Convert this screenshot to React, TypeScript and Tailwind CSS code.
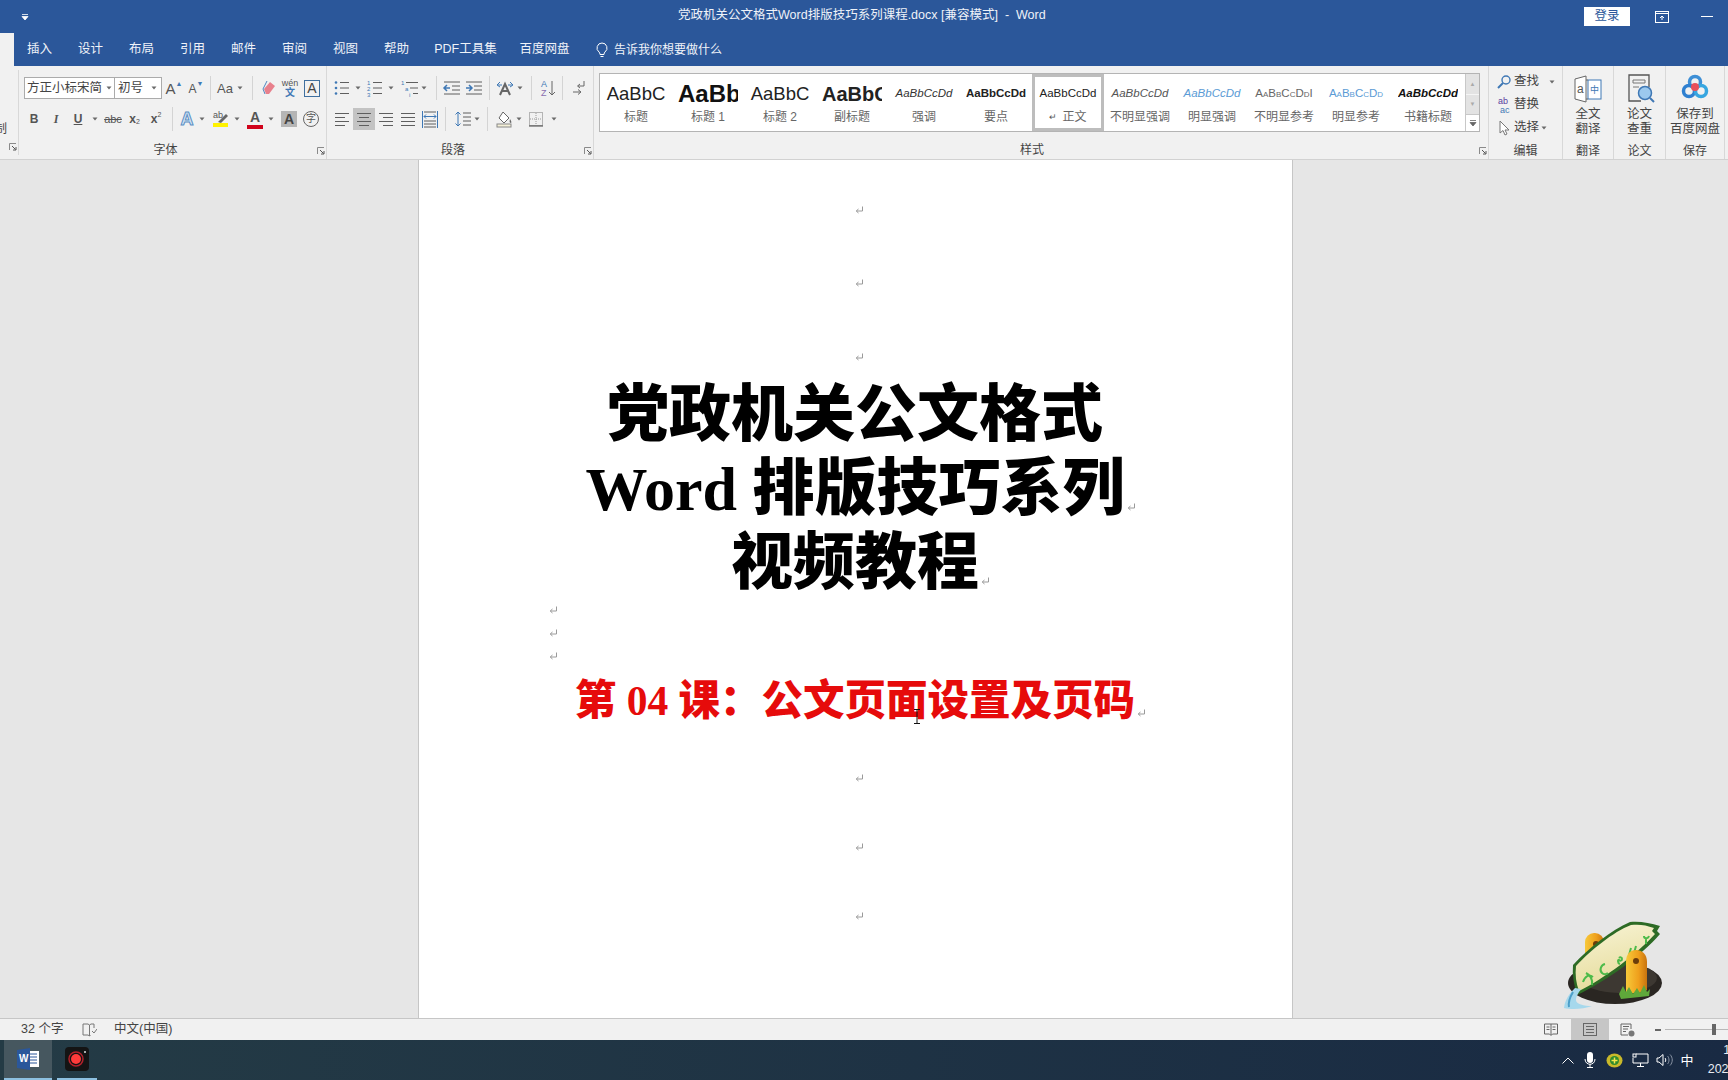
import React from "react";

const c = "#5f5f5f";
const blue = "#3f78b5";

const Caret = ({ className = "" }: { className?: string }) => (
  <div className={"flex items-center justify-center shrink-0 " + className}>
    <svg width="6" height="4" viewBox="0 0 6 4">
      <path d="M0.5 0.5h5L3 3.5z" fill="#6a6a6a" />
    </svg>
  </div>
);

const Sep = ({ className = "" }: { className?: string }) => (
  <div className={"w-px h-[24px] bg-[#d4d4d4] shrink-0 " + className} />
);

const Cell = ({ className = "", children }: { className?: string; children: React.ReactNode }) => (
  <div className={"flex items-center justify-center shrink-0 h-[22px] " + className}>{children}</div>
);

const Launcher = () => (
  <div className="absolute right-[1px] bottom-[4px] w-[8px] h-[8px]">
    <svg width="8" height="8" viewBox="0 0 8 8">
      <path d="M0.5 7V0.5H7" stroke="#8a8a8a" fill="none" />
      <path d="M3 3l3.5 3.5M7 4v3H4" stroke="#555" fill="none" />
    </svg>
  </div>
);

const GroupLabel = ({ children, className = "" }: { children: React.ReactNode; className?: string }) => (
  <div className={"h-[20px] shrink-0 flex items-center justify-center text-[12px] text-[#444] leading-none " + className}>
    {children}
  </div>
);

const Lines = ({ rows, x1, x2 }: { rows: number[]; x1: number[]; x2: number[] }) => (
  <>
    {rows.map((y, i) => (
      <path key={i} d={`M${x1[i]} ${y}H${x2[i]}`} stroke={c} strokeWidth="1" />
    ))}
  </>
);

const Ico = ({ children }: { children: React.ReactNode }) => (
  <svg width="20" height="20" viewBox="0 0 20 20" fill="none">
    {children}
  </svg>
);

const Align = ({ kind }: { kind: "left" | "center" | "right" | "just" }) => {
  const x1 =
    kind === "left" ? [3, 3, 3, 3] : kind === "center" ? [3, 5, 3, 5] : kind === "right" ? [3, 7, 3, 7] : [3, 3, 3, 3];
  const x2 =
    kind === "left" ? [17, 13, 17, 13] : kind === "center" ? [17, 15, 17, 15] : [17, 17, 17, 17];
  return (
    <Ico>
      <Lines rows={[4.5, 8.5, 12.5, 16.5]} x1={x1} x2={x2} />
    </Ico>
  );
};

const ParaMark = () => (
  <svg width="9" height="9" viewBox="0 0 9 9" fill="none" className="shrink-0">
    <path d="M7.5 0.5V5H1.5M3.5 3L1.2 5l2.3 2" stroke="#9a9a9a" strokeWidth="1" />
  </svg>
);

const MarkRow = ({ className = "" }: { className?: string }) => (
  <div className={"flex items-center justify-center shrink-0 pl-[8px] " + className}>
    <ParaMark />
  </div>
);

const FontRowOne = () => (
  <div className="flex items-center h-[22px] pl-[5px]">
    <div className="flex items-center w-[91px] h-[22px] border border-[#ababab] bg-white shrink-0 pl-[2px]">
      <span className="text-[12.5px] text-[#444] whitespace-nowrap leading-none">方正小标宋简</span>
      <Caret className="w-[10px] ml-[2px]" />
    </div>
    <div className="flex items-center w-[47px] h-[22px] border border-l-0 border-[#ababab] bg-white shrink-0 pl-[3px]">
      <span className="text-[12.5px] text-[#444] leading-none">初号</span>
      <Caret className="w-[10px] ml-[6px]" />
    </div>
    <Cell className="w-[22px] ml-px">
      <span className="text-[15px] text-[#555] leading-none">A</span>
      <span className="text-[7px] text-[#3f78b5] -mt-[10px] leading-none">▲</span>
    </Cell>
    <Cell className="w-[22px]">
      <span className="text-[12px] text-[#555] leading-none mt-[2px]">A</span>
      <span className="text-[7px] text-[#3f78b5] -mt-[10px] leading-none">▼</span>
    </Cell>
    <Sep className="ml-[3px]" />
    <Cell className="w-[22px] ml-[3px]">
      <span className="text-[13px] text-[#555] leading-none">Aa</span>
    </Cell>
    <Caret className="w-[8px]" />
    <Sep className="ml-[8px]" />
    <Cell className="w-[22px] ml-[5px]">
      <Ico>
        <path d="M5 11l6-7 5 4-6 8H7z" fill="#e8808c" />
        <path d="M8 3l-4 8 2 5" stroke="#4f86c0" strokeWidth="1" />
      </Ico>
    </Cell>
    <Cell className="w-[20px] flex-col">
      <span className="text-[9px] text-[#555] leading-[9px]">wén</span>
      <span className="text-[10px] text-[#3f78b5] leading-[10px] font-bold">文</span>
    </Cell>
    <Cell className="w-[22px] ml-px">
      <div className="w-[16px] h-[17px] border border-[#3f6f9f] flex items-center justify-center text-[14px] text-[#444] leading-none">
        A
      </div>
    </Cell>
  </div>
);

const FontRowTwo = () => (
  <div className="flex items-center h-[22px] pl-[4px]">
    <Cell className="w-[22px] text-[12px] font-bold text-[#555]">B</Cell>
    <Cell className="w-[22px] text-[12px] italic font-bold text-[#555] [font-family:'Liberation_Serif',serif]">I</Cell>
    <Cell className="w-[22px] text-[12px] font-bold text-[#555] underline">U</Cell>
    <Caret className="w-[12px]" />
    <Cell className="w-[22px] ml-px text-[11px] text-[#555] line-through">abc</Cell>
    <Cell className="w-[21px] text-[12px] font-bold text-[#555]">
      x<span className="text-[7px] mt-[7px] font-normal">2</span>
    </Cell>
    <Cell className="w-[22px] text-[12px] font-bold text-[#555]">
      x<span className="text-[7px] -mt-[7px] font-normal">2</span>
    </Cell>
    <Sep className="ml-[5px]" />
    <Cell className="w-[20px] ml-[4px]">
      <span className="text-[18px] font-bold leading-none text-[#d6e6f5] [-webkit-text-stroke:1px_#5b8fc4]">A</span>
    </Cell>
    <Caret className="w-[10px]" />
    <Cell className="w-[22px] ml-[3px]">
      <Ico>
        <rect x="2" y="14" width="15" height="4" fill="#fff200" />
        <path d="M7 13l8-8 2 2-7 7z" fill="#666" />
        <text x="2" y="9" fontSize="9" fill="#555" fontFamily="Liberation Sans">ab</text>
      </Ico>
    </Cell>
    <Caret className="w-[10px]" />
    <Cell className="w-[22px] ml-[2px] flex-col">
      <span className="text-[14px] font-bold leading-[15px] text-[#555]">A</span>
      <div className="w-[16px] h-[4px] bg-[#d0021b]" />
    </Cell>
    <Caret className="w-[10px]" />
    <Cell className="w-[22px] ml-[2px]">
      <div className="w-[16px] h-[16px] bg-[#b5b5b5] flex items-center justify-center text-[14px] font-bold text-[#444] leading-none">
        A
      </div>
    </Cell>
    <Cell className="w-[22px]">
      <div className="w-[16px] h-[16px] rounded-full border border-[#666] flex items-center justify-center text-[10px] text-[#555] leading-none">
        字
      </div>
    </Cell>
  </div>
);

const ParaRowOne = () => (
  <div className="flex items-center h-[22px] pl-[4px]">
    <Cell className="w-[22px]">
      <Ico>
        <circle cx="4" cy="4.5" r="1.3" fill={blue} />
        <circle cx="4" cy="10" r="1.3" fill={blue} />
        <circle cx="4" cy="15.5" r="1.3" fill={blue} />
        <Lines rows={[4.5, 10, 15.5]} x1={[8, 8, 8]} x2={[17, 17, 17]} />
      </Ico>
    </Cell>
    <Caret className="w-[10px]" />
    <Cell className="w-[22px] ml-px">
      <Ico>
        <text x="2" y="7" fontSize="6" fill={blue}>1</text>
        <text x="2" y="13" fontSize="6" fill={blue}>2</text>
        <text x="2" y="19" fontSize="6" fill={blue}>3</text>
        <Lines rows={[4.5, 10, 15.5]} x1={[8, 8, 8]} x2={[17, 17, 17]} />
      </Ico>
    </Cell>
    <Caret className="w-[10px]" />
    <Cell className="w-[22px] ml-[3px]">
      <Ico>
        <text x="1" y="7" fontSize="6" fill={blue}>1</text>
        <text x="5" y="13" fontSize="6" fill={blue}>a</text>
        <text x="9" y="19" fontSize="6" fill={blue}>i</text>
        <Lines rows={[4.5, 10, 15.5]} x1={[6, 10, 13]} x2={[18, 18, 18]} />
      </Ico>
    </Cell>
    <Caret className="w-[6px]" />
    <Sep className="ml-[9px]" />
    <Cell className="w-[22px] ml-[4px]">
      <Ico>
        <Lines rows={[4, 16]} x1={[2, 2]} x2={[18, 18]} />
        <Lines rows={[8, 12]} x1={[10, 10]} x2={[18, 18]} />
        <path d="M8 10H2M5 7l-3 3 3 3" stroke={blue} strokeWidth="1.5" />
      </Ico>
    </Cell>
    <Cell className="w-[22px]">
      <Ico>
        <Lines rows={[4, 16]} x1={[2, 2]} x2={[18, 18]} />
        <Lines rows={[8, 12]} x1={[10, 10]} x2={[18, 18]} />
        <path d="M2 10h6M5 7l3 3-3 3" stroke={blue} strokeWidth="1.5" />
      </Ico>
    </Cell>
    <Sep className="ml-[4px]" />
    <Cell className="w-[22px] ml-[4px]">
      <Ico>
        <path d="M5 17l5-11 5 11M7 13h6" stroke="#666" strokeWidth="2" />
        <path d="M2 7l3-3M2 7l3 2M18 7l-3-3M18 7l-3 2M3 7h4M13 7h4" stroke={blue} strokeWidth="1" />
      </Ico>
    </Cell>
    <Caret className="w-[8px]" />
    <Sep className="ml-[7px]" />
    <Cell className="w-[22px] ml-[5px]">
      <Ico>
        <text x="3" y="9" fontSize="9" fill={blue} fontFamily="Liberation Sans">A</text>
        <text x="3" y="18" fontSize="9" fill="#8a6fb0" fontFamily="Liberation Sans">Z</text>
        <path d="M14 3v14M11 14l3 3 3-3" stroke="#666" strokeWidth="1" />
      </Ico>
    </Cell>
    <Sep className="ml-[3px]" />
    <Cell className="w-[22px] ml-[5px]">
      <Ico>
        <path d="M15 3v5H9M11 6L8.5 8l2.5 2" stroke="#666" strokeWidth="1" />
        <path d="M4 14h7M9 11.5l3 2.5-3 2.5" stroke="#666" strokeWidth="1" />
      </Ico>
    </Cell>
  </div>
);

const ParaRowTwo = () => (
  <div className="flex items-center h-[22px] pl-[4px]">
    <Cell className="w-[22px]">
      <Align kind="left" />
    </Cell>
    <Cell className="w-[22px] bg-[#c3c3c3]">
      <Align kind="center" />
    </Cell>
    <Cell className="w-[22px]">
      <Align kind="right" />
    </Cell>
    <Cell className="w-[22px]">
      <Align kind="just" />
    </Cell>
    <Cell className="w-[22px]">
      <Ico>
        <Lines rows={[3, 12, 15, 18]} x1={[4, 4, 4, 4]} x2={[16, 16, 16, 16]} />
        <path d="M2.5 2v17M17.5 2v17" stroke={blue} />
        <path d="M4 7.5h12M6 5.5l-2 2 2 2M14 5.5l2 2-2 2" stroke={blue} />
      </Ico>
    </Cell>
    <Sep className="ml-[4px]" />
    <Cell className="w-[22px] ml-[6px]">
      <Ico>
        <path d="M5 3v14M2.5 5.5L5 3l2.5 2.5M2.5 14.5L5 17l2.5-2.5" stroke={blue} />
        <Lines rows={[4, 8, 12, 16]} x1={[10, 10, 10, 10]} x2={[18, 18, 18, 18]} />
      </Ico>
    </Cell>
    <Caret className="w-[6px]" />
    <Sep className="ml-[7px]" />
    <Cell className="w-[22px] ml-[5px]">
      <Ico>
        <path d="M9 3l6 6-5 5-5-5z" stroke="#666" fill="#fff" />
        <path d="M16 10c1 2 2 3 1 4-1 0-2-1-1-4z" fill="#666" />
        <rect x="3" y="15" width="14" height="3" fill="#f4f0d8" stroke="#888" />
      </Ico>
    </Cell>
    <Caret className="w-[8px]" />
    <Cell className="w-[22px] ml-[2px]">
      <Ico>
        <rect x="3.5" y="3.5" width="13" height="13" stroke="#777" strokeDasharray="1 1" />
        <path d="M10 4v12M4 10h12" stroke="#999" strokeDasharray="1 1" />
        <path d="M3 17h14" stroke="#444" />
      </Ico>
    </Cell>
    <Caret className="w-[10px] ml-[2px]" />
  </div>
);

type StyleItem = { top: string; label: string; cls: string };

const styleItems: StyleItem[] = [
  { top: "AaBbC", label: "标题", cls: "text-[18.5px] text-[#222]" },
  { top: "AaBbC", label: "标题 1", cls: "text-[24px] font-bold text-[#111]" },
  { top: "AaBbC", label: "标题 2", cls: "text-[18.5px] text-[#222]" },
  { top: "AaBbC", label: "副标题", cls: "text-[20px] font-bold text-[#222]" },
  { top: "AaBbCcDd", label: "强调", cls: "text-[11.5px] italic text-[#333]" },
  { top: "AaBbCcDd", label: "要点", cls: "text-[11.5px] font-bold text-[#222]" },
  { top: "AaBbCcDd", label: "正文", cls: "text-[11.5px] text-[#222]" },
  { top: "AaBbCcDd", label: "不明显强调", cls: "text-[11.5px] italic text-[#555]" },
  { top: "AaBbCcDd", label: "明显强调", cls: "text-[11.5px] italic text-[#5b9bd5]" },
  { top: "AaBbCcDdI", label: "不明显参考", cls: "text-[11.5px] text-[#666] [font-variant:small-caps]" },
  { top: "AaBbCcDd", label: "明显参考", cls: "text-[11.5px] text-[#5b9bd5] [font-variant:small-caps]" },
  { top: "AaBbCcDd", label: "书籍标题", cls: "text-[11.5px] italic font-bold text-[#111]" },
];

const Gallery = () => (
  <div className="flex ml-[5px] mt-[7px] w-[881px] h-[59px] border border-[#b4b4b4] bg-white shrink-0">
    <div className="flex w-[865px] shrink-0">
      {styleItems.map((s, i) => (
        <div
          key={i}
          className={
            "w-[72px] h-[57px] shrink-0 flex flex-col items-center " +
            (s.label === "正文" ? "border-[3px] border-[#bdbdbd]" : "border-[3px] border-transparent")
          }
        >
          <div className="w-[60px] h-[30px] pt-[4px] overflow-hidden flex items-center justify-center-safe">
            <span className={"whitespace-nowrap leading-none " + s.cls}>{s.top}</span>
          </div>
          <div className="h-[20px] flex items-center text-[12px] text-[#666] leading-none whitespace-nowrap">
            {s.label === "正文" && <span className="text-[9px] mr-[5px] text-[#555]">↵</span>}
            {s.label}
          </div>
        </div>
      ))}
    </div>
    <div className="w-[14px] flex flex-col border-l border-[#c8c8c8]">
      <div className="h-[20px] bg-[#e3e3e3] flex items-center justify-center text-[6px] text-[#aaa]">▲</div>
      <div className="h-[20px] bg-[#e3e3e3] flex items-center justify-center text-[6px] text-[#aaa] border-t border-[#f5f5f5]">
        ▼
      </div>
      <div className="flex-1 flex items-center justify-center border-t border-[#c8c8c8]">
        <svg width="8" height="8" viewBox="0 0 8 8">
          <path d="M1 1.5h6M1 3.5h6L4 7z" stroke="#666" fill="#666" strokeWidth="0.8" />
        </svg>
      </div>
    </div>
  </div>
);

const EditRow = ({ icon, text, caret, caretClass }: { icon: React.ReactNode; text: string; caret?: boolean; caretClass?: string }) => (
  <div className="flex items-center h-[23px] shrink-0 pl-[5px]">
    <div className="w-[19px] h-[20px] flex items-center justify-center shrink-0">{icon}</div>
    <span className="text-[12.5px] text-[#444] leading-none ml-[1px] whitespace-nowrap">{text}</span>
    {caret && <Caret className={caretClass} />}
  </div>
);

const Ribbon = () => (
  <div className="flex h-[94px] bg-[#f1f1f1] border-b border-[#d2d2d2] shrink-0">
    {/* clipboard group, cut off at the window edge */}
    <div className="w-[19px] shrink-0 relative border-r border-[#d8d8d8] my-[4px] overflow-hidden">
      <span className="absolute top-[53px] -left-[5px] text-[12px] text-[#444] leading-none">制</span>
      <Launcher />
    </div>

    <div className="w-[308px] shrink-0 relative border-r border-[#d8d8d8]">
      <div className="pt-[11px]">
        <FontRowOne />
      </div>
      <div className="mt-[9px]">
        <FontRowTwo />
      </div>
      <GroupLabel className="mt-[10px] pr-[14px]">字体</GroupLabel>
      <Launcher />
    </div>

    <div className="w-[267px] shrink-0 relative border-r border-[#d8d8d8]">
      <div className="pt-[11px]">
        <ParaRowOne />
      </div>
      <div className="mt-[9px]">
        <ParaRowTwo />
      </div>
      <GroupLabel className="mt-[10px] pr-[14px]">段落</GroupLabel>
      <Launcher />
    </div>

    <div className="w-[895px] shrink-0 relative border-r border-[#d8d8d8]">
      <Gallery />
      <GroupLabel className="mt-[8px] pr-[18px]">样式</GroupLabel>
      <Launcher />
    </div>

    <div className="w-[74px] shrink-0 flex flex-col border-r border-[#d8d8d8]">
      <div className="pt-[4px] h-[75px] shrink-0 flex flex-col">
        <EditRow
          text="查找"
          caret
          caretClass="w-[10px] ml-[8px]"
          icon={
            <svg width="16" height="16" viewBox="0 0 16 16" fill="none">
              <circle cx="10" cy="6" r="4" stroke="#3f78b5" strokeWidth="1.4" />
              <path d="M7 9l-5 5" stroke="#3f78b5" strokeWidth="2" />
            </svg>
          }
        />
        <EditRow
          text="替换"
          icon={
            <svg width="18" height="18" viewBox="0 0 18 18">
              <text x="3" y="8" fontSize="9" fill="#5b3fa0" fontFamily="Liberation Sans">ab</text>
              <text x="5" y="17" fontSize="9" fill="#3f78b5" fontFamily="Liberation Sans">ac</text>
            </svg>
          }
        />
        <EditRow
          text="选择"
          caret
          caretClass="w-[8px] ml-[1px]"
          icon={
            <svg width="14" height="18" viewBox="0 0 14 18" fill="none">
              <path d="M3 2v12l3-2.500 2 4.500 2-1-2-4h4z" stroke="#777" fill="#fff" />
            </svg>
          }
        />
      </div>
      <GroupLabel>编辑</GroupLabel>
    </div>

    <div className="w-[51px] shrink-0 flex flex-col items-center border-r border-[#d8d8d8]">
      <div className="h-[38px] shrink-0 flex items-end">
        <svg width="30" height="30" viewBox="0 0 30 30" fill="none">
          <path d="M2 5l11-3v26L2 25z" stroke="#666" fill="#fff" />
          <rect x="15" y="6" width="13" height="19" stroke="#3f78b5" fill="#fff" />
          <path d="M13 6h2M13 25h2" stroke="#666" />
          <text x="4" y="19" fontSize="12" fill="#555" fontFamily="Liberation Sans">a</text>
          <text x="17" y="19" fontSize="9" fill="#3f78b5" fontFamily="Noto Sans CJK SC">中</text>
        </svg>
      </div>
      <div className="h-[37px] shrink-0 pt-[3px] text-center text-[12.5px] leading-[15px] text-[#444]">
        全文
        <br />
        翻译
      </div>
      <GroupLabel>翻译</GroupLabel>
    </div>

    <div className="w-[52px] shrink-0 flex flex-col items-center border-r border-[#d8d8d8]">
      <div className="h-[38px] shrink-0 flex items-end">
        <svg width="30" height="32" viewBox="0 0 30 32" fill="none">
          <path d="M16 29H4V3h20v12" stroke="#555" strokeWidth="1.3" />
          <path d="M8 8h12v3H8zM8 15h6" stroke="#777" />
          <circle cx="20" cy="21" r="6.500" fill="#9cc9ee" stroke="#3f78b5" strokeWidth="1.5" />
          <path d="M25 26l4 4" stroke="#3f78b5" strokeWidth="2" />
        </svg>
      </div>
      <div className="h-[37px] shrink-0 pt-[3px] text-center text-[12.5px] leading-[15px] text-[#444]">
        论文
        <br />
        查重
      </div>
      <GroupLabel>论文</GroupLabel>
    </div>

    <div className="w-[59px] shrink-0 flex flex-col items-center border-r border-[#d8d8d8]">
      <div className="h-[38px] shrink-0 flex items-end pb-[3px]">
        <svg width="28" height="28" viewBox="0 0 28 28" fill="none">
          <circle cx="14" cy="9" r="5.500" stroke="#3d8fd6" strokeWidth="3.500" />
          <circle cx="8" cy="18" r="5.500" stroke="#2f80d0" strokeWidth="3.500" />
          <circle cx="20" cy="18" r="5.500" stroke="#37a6e0" strokeWidth="3.500" />
          <circle cx="14" cy="14" r="4" fill="#e8505b" />
        </svg>
      </div>
      <div className="h-[37px] shrink-0 pt-[3px] text-center text-[12.5px] leading-[15px] text-[#444] whitespace-nowrap">
        保存到
        <br />
        百度网盘
      </div>
      <GroupLabel>保存</GroupLabel>
    </div>
  </div>
);

const tabs = [
  { t: "插入", w: "w-[51px]" },
  { t: "设计", w: "w-[51px]" },
  { t: "布局", w: "w-[51px]" },
  { t: "引用", w: "w-[51px]" },
  { t: "邮件", w: "w-[51px]" },
  { t: "审阅", w: "w-[51px]" },
  { t: "视图", w: "w-[51px]" },
  { t: "帮助", w: "w-[51px]" },
  { t: "PDF工具集", w: "w-[87px]" },
  { t: "百度网盘", w: "w-[71px]" },
];

const Mascot = () => (
  <svg width="104" height="96" viewBox="0 0 104 96" fill="none" className="absolute left-[1561px] top-[916px]">
    <defs>
      <linearGradient id="post" x1="0" y1="0" x2="1" y2="0">
        <stop offset="0" stopColor="#f7c93a" />
        <stop offset="0.6" stopColor="#ef9f1c" />
        <stop offset="1" stopColor="#c8740f" />
      </linearGradient>
      <linearGradient id="leaf" x1="0" y1="0" x2="0.3" y2="1">
        <stop offset="0" stopColor="#f8f4d6" />
        <stop offset="1" stopColor="#e6dc9c" />
      </linearGradient>
    </defs>
    <ellipse cx="54" cy="67" rx="47" ry="21" fill="#2a2622" />
    <ellipse cx="58" cy="62" rx="38" ry="15" fill="#3d3832" />
    <rect x="24" y="17" width="19" height="36" rx="9" fill="url(#post)" />
    <circle cx="35" cy="28" r="3" fill="#6b3c0a" />
    <path d="M12 49C28 32 50 14 69 6c10-1 20 1 30 4l-3 5 3 3C80 40 44 66 16 79c-3-10-5-20-4-30z" fill="#2d6b25" />
    <path d="M15 50C30 34 52 16 70 9c8-1 15 0 23 3l-2 3 3 3C76 38 44 62 18 75c-3-8-4-16-3-25z" fill="url(#leaf)" />
    <path d="M22 66c2-6 6-8 10-5M25 57c4 2 7 5 6 12M44 48c-4 1-6 6-3 9 2 2 5 1 6 0M58 42c1-1 3-1 3 1s-2 2-3 1-2 3 1 4M70 32l-2 7M75 30l-2 7M83 20c0 3 4 3 5 0M85 22v6" stroke="#4dbb4a" strokeWidth="2" />
    <path d="M65 76V46c0-8 4-12 10-12s11 4 11 12v28c-6 4-15 4-21 2z" fill="url(#post)" />
    <circle cx="75" cy="45" r="3" fill="#6b3c0a" />
    <path d="M58 78l4-8 3 6 3-5 4 7 4-6 3 5 4-8 3 7 3-3-1 7-28 3z" fill="#5fa83a" />
    <path d="M14 72C8 78 4 84 3 92c8 2 20 1 28-2-8 0-16-2-16-6 0-4 3-8 5-11z" fill="#a6d8ec" />
    <path d="M12 76c-3 5-5 10-4 15" stroke="#4c9fc9" strokeWidth="2" />
  </svg>
);

export default function App() {
  return (
    <div className="relative w-[1728px] h-[1080px] overflow-hidden flex flex-col bg-[#e6e6e6] [font-family:'Liberation_Sans','Noto_Sans_CJK_SC',sans-serif]">
      {/* title bar */}
      <div className="h-[33px] bg-[#2b579a] flex items-center shrink-0 text-white">
        <div className="w-[678px] shrink-0 pl-[21px]">
          <svg width="8" height="8" viewBox="0 0 8 8" fill="none">
            <path d="M1 1.5h6M1 3.500h6L4 7z" stroke="#fff" fill="#fff" strokeWidth="0.8" />
          </svg>
        </div>
        <span className="w-[906px] shrink-0 whitespace-pre text-[12.5px] text-[#eef2f8] leading-none -mt-[3px]">
          党政机关公文格式Word排版技巧系列课程.docx [兼容模式]  -  Word
        </span>
        <button className="w-[46px] h-[19px] bg-white text-[#2b579a] text-[12.5px] leading-none shrink-0 -mt-[1px]">
          登录
        </button>
        <div className="w-[64px] shrink-0 flex justify-center">
          <svg width="14" height="12" viewBox="0 0 14 12" fill="none">
            <rect x="0.500" y="0.500" width="13" height="11" stroke="#fff" />
            <path d="M0.500 2.500h13M7 9V5M5 7l2-2 2 2" stroke="#fff" />
          </svg>
        </div>
        <div className="w-[12px] ml-[7px] shrink-0 h-px bg-white" />
      </div>

      {/* tab row */}
      <div className="h-[33px] bg-[#2b579a] flex items-center shrink-0 text-[#f0f3f9] text-[12.5px] leading-none">
        <div className="w-[14px] h-full bg-[#f1f1f1] shrink-0" />
        {tabs.map((t) => (
          <div key={t.t} className={"text-center shrink-0 whitespace-nowrap " + t.w}>
            {t.t}
          </div>
        ))}
        <svg width="14" height="16" viewBox="0 0 14 16" fill="none" className="ml-[15px] shrink-0">
          <path d="M7 1a5 5 0 00-3 9c.6.5 1 1.200 1 2.500h4c0-1.300.4-2 1-2.500A5 5 0 007 1zM5.500 14.500h3" stroke="#fff" />
        </svg>
        <span className="ml-[5px] whitespace-nowrap text-[12px]">告诉我你想要做什么</span>
      </div>

      <Ribbon />

      {/* document */}
      <div className="flex-1 min-h-0 flex justify-center pr-[18px] overflow-hidden">
        <div className="w-[875px] bg-white border-x border-[#c6c6c6] shrink-0 flex flex-col items-center pt-[40px]">
          <MarkRow className="h-[20px]" />
          <MarkRow className="h-[20px] mt-[53px]" />
          <MarkRow className="h-[20px] mt-[54px]" />
          <div className="mt-[11px] flex flex-col items-center text-[62px] leading-[74px] font-black text-black whitespace-nowrap [font-family:'Liberation_Serif','Noto_Sans_CJK_SC',serif]">
            <div>党政机关公文格式</div>
            <div className="relative">
              Word 排版技巧系列
              <div className="absolute left-full bottom-[14px] ml-[2px] flex">
                <ParaMark />
              </div>
            </div>
            <div className="relative">
              视频教程
              <div className="absolute left-full bottom-[14px] ml-[2px] flex">
                <ParaMark />
              </div>
            </div>
          </div>
          <div className="w-full pl-[130px] flex flex-col">
            <div className="h-[21px] flex items-center"><ParaMark /></div>
            <div className="h-[24px] flex items-center"><ParaMark /></div>
            <div className="h-[23px] flex items-center"><ParaMark /></div>
          </div>
          <div className="relative h-[64px] pt-[4px] flex items-center text-[41.500px] leading-none font-black text-[#e60b0b] whitespace-nowrap [font-family:'Liberation_Serif','Noto_Sans_CJK_SC',serif]">
            {"第 04 课\uFF1A公文页面设置及页码"}
            <div className="absolute left-full bottom-[14px] ml-[2px] flex">
              <ParaMark />
            </div>
          </div>
          <MarkRow className="h-[20px] mt-[36px]" />
          <MarkRow className="h-[20px] mt-[49px]" />
          <MarkRow className="h-[20px] mt-[49px]" />
        </div>
      </div>

      {/* status bar */}
      <div className="h-[22px] bg-[#f1f1f1] border-t border-[#c6c6c6] flex items-center shrink-0 text-[12.500px] text-[#444] leading-none">
        <span className="ml-[21px] w-[61px] shrink-0 whitespace-nowrap">32 个字</span>
        <svg width="15" height="14" viewBox="0 0 15 14" fill="none" className="shrink-0">
          <path d="M1 1h5l1.500 1V13L6 12H1zM7.500 2L9 1h3v4M7.500 13l1-1" stroke="#777" />
          <path d="M10 8l2 2 3-4" stroke="#777" />
        </svg>
        <span className="ml-[17px] w-[1429px] shrink-0 whitespace-nowrap">中文(中国)</span>
        <div className="w-[18px] shrink-0 flex justify-center -ml-[1px]">
          <svg width="14" height="13" viewBox="0 0 14 13" fill="none">
            <path d="M0.500 1h13v10h-5L7 12.500 5.500 11h-5zM7 1v11M2.500 4h3M2.500 6.500h3M8.500 4h3M8.500 6.500h3" stroke="#666" />
          </svg>
        </div>
        <div className="w-[38px] h-full ml-[11px] bg-[#c6c6c6] shrink-0 flex items-center justify-center">
          <svg width="14" height="13" viewBox="0 0 14 13" fill="none">
            <rect x="0.500" y="0.500" width="13" height="12" stroke="#666" />
            <path d="M3 3.500h8M3 6.500h8M3 9.500h8" stroke="#666" />
          </svg>
        </div>
        <div className="w-[37px] shrink-0 flex justify-center">
          <svg width="15" height="14" viewBox="0 0 15 14" fill="none">
            <path d="M8 12H1V1h10v5M3 3.500h6M3 6h5M3 8.500h3" stroke="#666" />
            <circle cx="11.500" cy="10.500" r="3" fill="#777" />
          </svg>
        </div>
        <div className="w-[6px] h-[2px] bg-[#666] shrink-0 ml-[9px]" />
        <div className="ml-[4px] flex-1 h-px bg-[#b8b8b8] relative">
          <div className="absolute left-[47px] -top-[5px] w-[4px] h-[11px] bg-[#666]" />
        </div>
      </div>

      {/* taskbar */}
      <div className="h-[40px] shrink-0 flex items-stretch bg-gradient-to-r from-[#243b45] to-[#192a43] text-white overflow-hidden">
        <div className="ml-[4px] w-[48px] bg-[#46575f] border-b-[2px] border-[#8dc0e0] shrink-0 flex items-center justify-center">
          <svg width="24" height="22" viewBox="0 0 24 22">
            <rect x="10" y="3" width="13" height="16" fill="#fff" />
            <path d="M13 6h8M13 9h8M13 12h8M13 15h8" stroke="#2b579a" />
            <path d="M1 2l13-2v22L1 20z" fill="#2b579a" />
            <text x="3" y="14" fontSize="10" fontWeight="bold" fill="#fff" fontFamily="Liberation Sans">W</text>
          </svg>
        </div>
        <div className="ml-[5px] w-[40px] border-b-[2px] border-[#8dc0e0] shrink-0 flex items-center justify-center">
          <svg width="24" height="24" viewBox="0 0 24 24">
            <rect width="24" height="24" rx="4" fill="#141414" />
            <circle cx="11" cy="12" r="7" fill="none" stroke="#b3202a" strokeWidth="1.500" />
            <circle cx="11" cy="12" r="5" fill="#ff3b3b" />
            <circle cx="20" cy="5" r="1" fill="#ddd" />
          </svg>
        </div>
        <div className="w-[1460px] shrink-0" />
        <div className="w-[21px] shrink-0 flex items-center justify-center">
          <svg width="12" height="7" viewBox="0 0 12 7" fill="none">
            <path d="M0.500 6.500L6 1l5.500 5.500" stroke="#fff" />
          </svg>
        </div>
        <div className="w-[23px] shrink-0 flex items-center justify-center">
          <svg width="12" height="16" viewBox="0 0 12 16">
            <rect x="3" y="0" width="6" height="11" rx="3" fill="#fff" />
            <path d="M1 7c0 7 10 7 10 0M6 12v3M3 15.500h6" stroke="#fff" fill="none" />
          </svg>
        </div>
        <div className="w-[27px] shrink-0 flex items-center justify-center">
          <svg width="17" height="15" viewBox="0 0 17 15">
            <ellipse cx="8.500" cy="7.500" rx="8" ry="7" fill="#c9b92a" />
            <circle cx="8.500" cy="7.500" r="4.500" fill="#2d8a2d" />
            <path d="M8.500 4.500v6M5.500 7.500h6" stroke="#f4e84a" strokeWidth="1.500" />
          </svg>
        </div>
        <div className="w-[24px] shrink-0 flex items-center justify-center">
          <svg width="17" height="14" viewBox="0 0 17 14" fill="none">
            <path d="M4 1h12v9H1V5M8.500 10v3M5 13.500h7" stroke="#fff" />
            <rect x="1" y="1" width="3" height="3" stroke="#fff" />
          </svg>
        </div>
        <div className="w-[24px] shrink-0 flex items-center justify-center">
          <svg width="17" height="14" viewBox="0 0 17 14" fill="none">
            <path d="M1 5v4h2l4 3.500v-11L3 5z" stroke="#fff" />
            <path d="M9 5c1 1 1 3 0 4" stroke="#fff" />
            <path d="M11.500 3c2 2 2 6 0 8M14 1.500c3 3 3 8 0 11" stroke="#8a94a4" />
          </svg>
        </div>
        <div className="w-[22px] shrink-0 flex items-center justify-center text-[13px] leading-none">中</div>
        <div className="ml-[9px] w-[64px] shrink-0 flex flex-col items-center justify-center text-[12.500px] leading-[19px] whitespace-nowrap text-[#e8ecf2]">
          <span>16:28</span>
          <span>2021/10/19</span>
        </div>
      </div>

      <Mascot />

      {/* i-beam mouse pointer */}
      <svg width="8" height="15" viewBox="0 0 8 15" fill="none" className="absolute left-[913px] top-[709px]">
        <path d="M1 0.500h6M1 14.500h6M4 1v13" stroke="#111" />
      </svg>
    </div>
  );
}
